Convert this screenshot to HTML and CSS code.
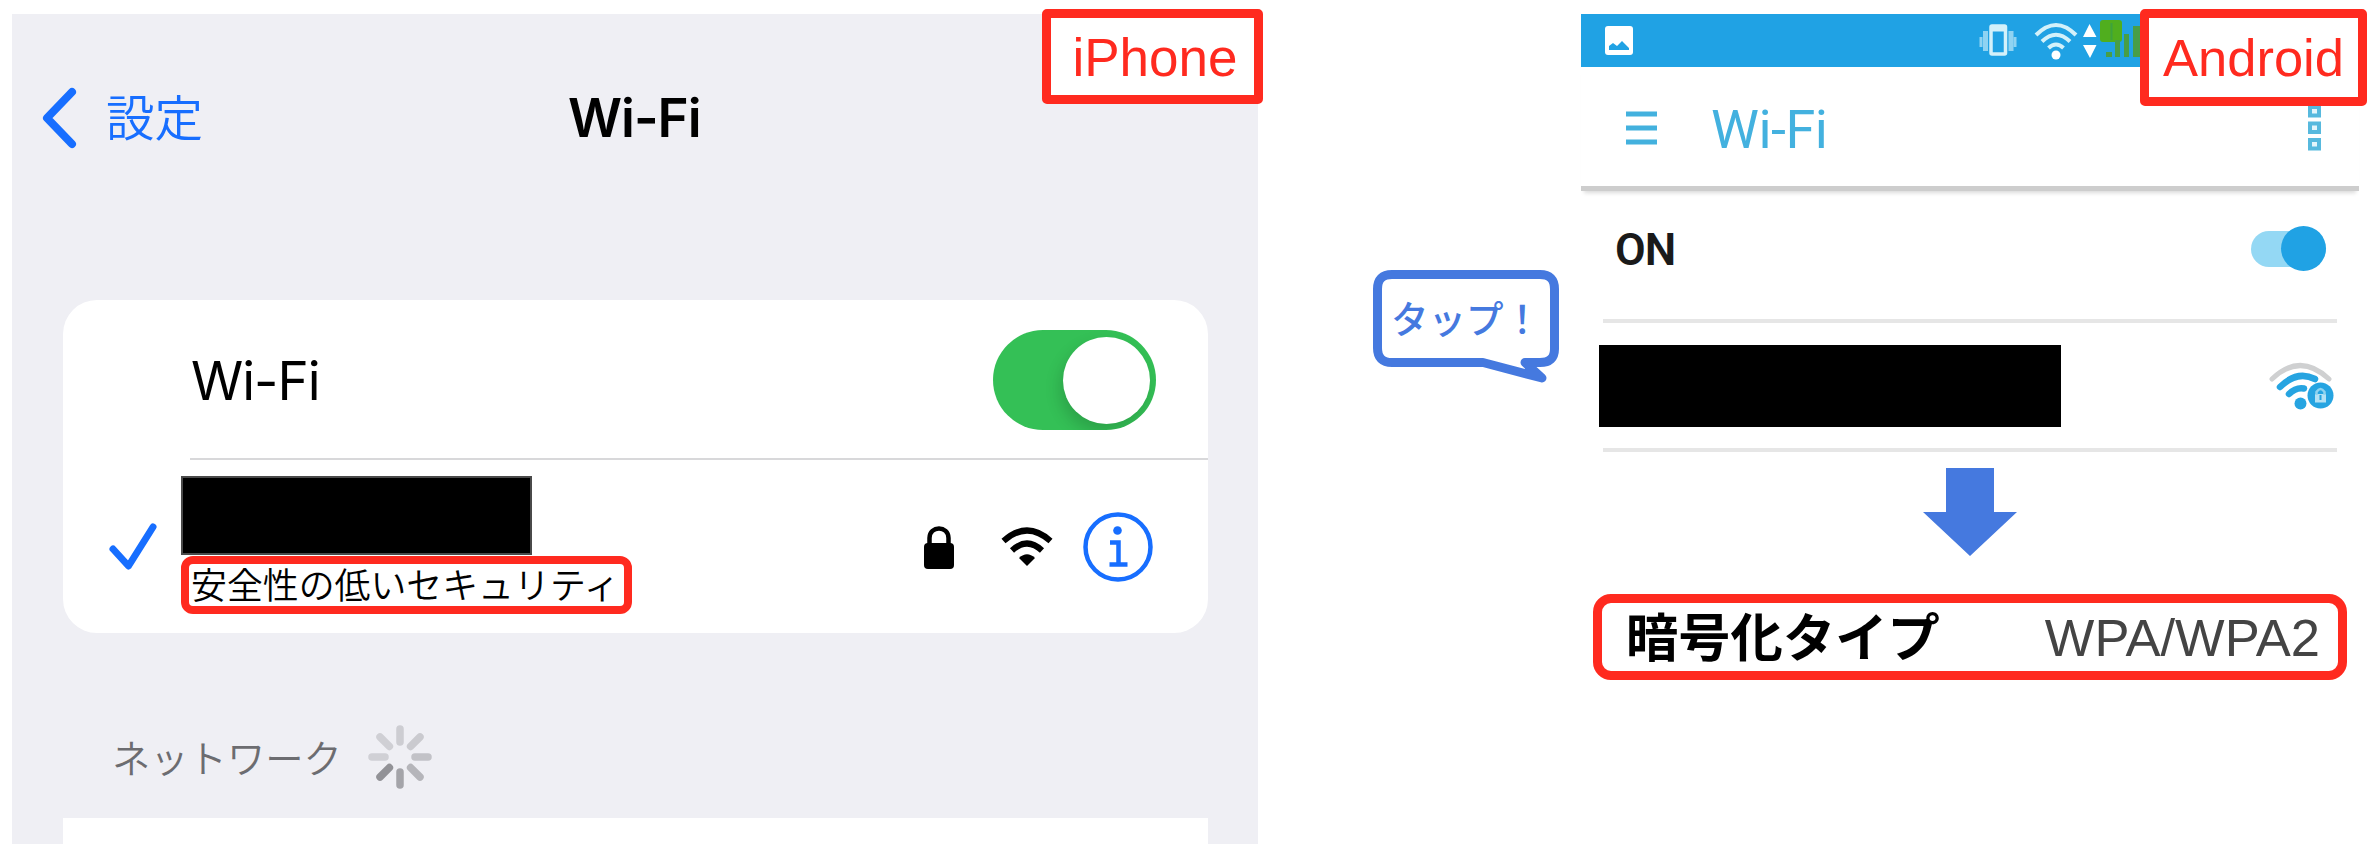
FILE: index.html
```html
<!DOCTYPE html>
<html lang="ja">
<head>
<meta charset="utf-8">
<title>Wi-Fi</title>
<link rel="stylesheet" href="styles.css">
</head>
<body>
<main class="page">
  <section class="iphone">
    <span class="badge badge-iphone">iPhone</span>
    <header class="ios-nav">
      <svg class="chevron" width="36" height="62" viewBox="0 0 36 62"><path d="M31 5 L6 31 L31 57" fill="none" stroke="#176eff" stroke-width="8" stroke-linecap="round" stroke-linejoin="round"/></svg>
      <span class="ios-back">設定</span>
      <h1 class="ios-title">Wi-Fi</h1>
    </header>
    <div class="ios-card">
      <div class="ios-row ios-row-toggle">
        <span class="ios-label">Wi-Fi</span>
        <span class="ios-switch"><span class="ios-knob"></span></span>
      </div>
      <div class="ios-row ios-row-network">
        <svg class="check" width="52" height="52" viewBox="0 0 52 52"><path d="M5 28 L20.500 45 L45 6" fill="none" stroke="#176eff" stroke-width="7" stroke-linecap="round" stroke-linejoin="round"/></svg>
        <div class="network-main">
          <div class="redacted-ios"></div>
          <div class="warning">安全性の低いセキュリティ</div>
        </div>
        <svg class="lock" width="30" height="43" viewBox="0 0 30 43"><rect x="0" y="17" width="30" height="26" rx="4"/><path d="M5.500 19 V12 C5.500 -0.700 24.500 -0.700 24.500 12 V19" fill="none" stroke="#000" stroke-width="4.500"/></svg>
        <svg class="wifi" width="52" height="40" viewBox="0 0 52 40"><g fill="none" stroke="#000" stroke-width="6"><path d="M2.500 14 Q26 -7 49.500 14"/><path d="M11 23.500 Q26 9.500 41 23.500"/></g><path d="M18 31 Q26 23.500 34 31 L26 39 Z"/></svg>
        <svg class="info" width="70" height="70" viewBox="0 0 70 70"><circle cx="35" cy="35" r="32.500" fill="none" stroke="#176eff" stroke-width="4.500"/><circle cx="34.500" cy="18.500" r="4.300" fill="#176eff"/><path d="M27 30.500 H35.500 V53 M26.500 52.500 H44.500" fill="none" stroke="#176eff" stroke-width="4.500"/></svg>
      </div>
    </div>
    <div class="ios-section">
      <span>ネットワーク</span>
      <svg width="66" height="66" viewBox="-33 -33 66 66"><g stroke-width="7.500" stroke-linecap="round"><path d="M0 -15 V-28" stroke="#cdcdd2"/><path d="M10.600 -10.600 L20 -20" stroke="#cacacf"/><path d="M15 0 H28" stroke="#c2c2c7"/><path d="M10.600 10.600 L20 20" stroke="#b5b5ba"/><path d="M0 15 V28" stroke="#a4a4a9"/><path d="M-10.600 10.600 L-20 20" stroke="#929297"/><path d="M-15 0 H-28" stroke="#d0d0d5"/><path d="M-10.600 -10.600 L-20 -20" stroke="#cfcfd4"/></g></svg>
    </div>
    <div class="ios-next"></div>
  </section>

  <div class="callout">
    <svg class="callout-shape" width="190" height="102" viewBox="0 0 190 102"><path d="M21 6.500 H169 Q183.500 6.500 183.500 21 V81 Q183.500 94.500 169 94.500 H154 L171 110 L112 94.500 H21 Q6.500 94.500 6.500 80 V21 Q6.500 6.500 21 6.500 Z" fill="#fff" stroke="#4579df" stroke-width="9" stroke-linejoin="round"/></svg>
    <span class="callout-text">タップ！</span>
  </div>

  <section class="android">
    <span class="badge badge-android">Android</span>
    <div class="status">
      <svg class="picture" width="28" height="29" viewBox="0 0 28 29"><rect width="28" height="29" rx="3" fill="#fff"/><path d="M4 24 V20 L8 17 L12 20 L17 15 L24 22 V24 Z" fill="#20a2e4"/></svg>
      <svg class="status-icons" width="182" height="44" viewBox="0 0 182 44"><g fill="none" stroke="#d3f1fa"><rect x="12" y="7" width="14.500" height="28" rx="1" stroke-width="3.500"/><path d="M12 10 H26" stroke-width="5"/><path d="M6.500 12 V32 M32 12 V32" stroke-width="5" stroke="#8fd3f2"/><path d="M2 18 V28 M36 18 V28" stroke-width="3" stroke="#8fd3f2"/><path d="M57 16 Q77 -4 97 16 M63 22.500 Q77 9 91 22.500 M69.500 29 Q77 22 84.500 29" stroke-width="4"/></g><circle cx="77" cy="36" r="4.500" fill="#fff"/><path d="M104 18 L110.500 5 L117.500 18 Z M104 26 H117.500 L111 39 Z" fill="#fff"/><rect x="121" y="1" width="22" height="22" rx="3" fill="#50ae1e"/><path d="M132.500 4 V21" stroke="#3da33c" stroke-width="2"/><path d="M127 33 H133 V38 H127 Z M136 21 H141 V38 H136 Z M145 15 H150 V38 H145 Z M154 7 H161 V38 H154 Z" fill="#489e46"/></svg>
    </div>
    <header class="android-bar">
      <svg width="31" height="34" viewBox="0 0 31 34"><path d="M0 3 H31 M0 17 H31 M0 31 H31" stroke="#43b1de" stroke-width="5"/></svg>
      <h2 class="android-title">Wi-Fi</h2>
      <svg class="more" width="13" height="46" viewBox="0 0 13 46"><g fill="#e4f5fb" stroke="#57b9de" stroke-width="4"><rect x="2" y="2" width="9" height="8.500"/><rect x="2" y="18.500" width="9" height="8.500"/><rect x="2" y="35" width="9" height="8.500"/></g></svg>
    </header>
    <div class="android-row row-on">
      <span class="on">ON</span>
      <span class="android-switch"><span class="android-knob"></span></span>
    </div>
    <div class="android-row row-network">
      <div class="redacted-android"></div>
      <svg class="wifi-lock" width="66" height="50" viewBox="0 0 66 50"><g fill="none" stroke-width="5" stroke-linecap="round"><path d="M4 18 Q32 -9 61 18" stroke="#cfd0d1"/><path d="M12 26 Q29 9 47 18" stroke="#26a4e1" stroke-width="6.500"/><path d="M21 33 Q28 26 36 27.500" stroke="#26a4e1" stroke-width="6.500"/></g><circle cx="32.500" cy="42.500" r="6" fill="#26a4e1"/><circle cx="52.500" cy="34.500" r="13" fill="#26a4e1"/><rect x="47" y="33" width="11" height="8.500" fill="#b4e1f4"/><path d="M48.500 34 V31 Q52.500 25 56.500 31 V34" fill="none" stroke="#8fd3f0" stroke-width="2.500"/><path d="M52.500 34 V39" stroke="#26a4e1" stroke-width="2"/></svg>
    </div>
    <svg class="arrow" width="96" height="89" viewBox="0 0 96 89"><path d="M24 0 H72 V44 H95 L48 88 L1 44 H24 Z" fill="#4579df"/></svg>
    <div class="encryption"><strong>暗号化タイプ</strong><span>WPA/WPA2</span></div>
  </section>
</main>
</body>
</html>
```
FILE: styles.css
```css
* { box-sizing: border-box; }
body { margin: 0; background: #fff; font-family: "Liberation Sans", "Noto Sans CJK JP", sans-serif; }
svg { display: block; flex: none; }
h1, h2 { margin: 0; }
.page { display: flex; align-items: flex-start; width: 2376px; height: 856px; padding-top: 14px; padding-left: 12px; overflow: hidden; }

.badge { position: absolute; z-index: 2; display: flex; align-items: center; justify-content: center; background: #fff; border: 9px solid #ff2a1f; border-radius: 5px; color: #ff2a1f; font-size: 53px; line-height: 1; white-space: nowrap; }
.badge-iphone { left: 1030px; top: -5px; width: 221px; height: 95px; padding: 2px 0 0 5px; }
.badge-android { left: 559px; top: -5px; width: 227px; height: 97px; padding-top: 1px; font-size: 52.500px; }

.iphone { position: relative; flex: none; display: flex; flex-direction: column; width: 1246px; height: 830px; padding: 0 50px 0 51px; background: #efeff4; }
.ios-nav { display: grid; grid-template-columns: 65px 462px auto; align-items: center; height: 207px; margin: 0 0 79px -22px; }
.ios-back { padding-bottom: 5px; color: #176eff; font: 350 48.500px/60px "Noto Sans CJK JP", sans-serif; }
.ios-title { font: 600 53px/60px Inter, sans-serif; letter-spacing: -1px; white-space: nowrap; padding-top: 1px; }
.ios-card { flex: none; height: 333px; background: #fff; border-radius: 34px; }
.ios-row { display: flex; }
.ios-row-toggle { align-items: center; justify-content: space-between; height: 160px; margin-left: 127px; padding: 2px 52px 0 1px; border-bottom: 2px solid #d8d8da; }
.ios-label { font: 400 53px/60px Inter, sans-serif; letter-spacing: -1px; padding-top: 1px; }
.ios-switch { display: flex; align-items: center; justify-content: flex-end; width: 163px; height: 100px; padding-right: 6px; border-radius: 50px; background: #34c056; overflow: hidden; }
.ios-knob { width: 87px; height: 87px; border-radius: 50%; background: #fff; box-shadow: -3px 8px 16px rgba(0,0,0,.16); }
.ios-row-network { align-items: center; height: 173px; padding: 1px 56px 0 45px; }
.network-main { width: 452px; margin-left: 21px; align-self: flex-start; padding-top: 15px; }
.redacted-ios { width: 351px; height: 79px; background: #000; border: 2px solid #4a4a4a; margin-bottom: 1px; }
.warning { width: 451px; height: 58px; border: 8.500px solid #ff2a1f; border-radius: 12px; padding-left: 2px; font: 350 35.900px/38px "Noto Sans CJK JP", sans-serif; white-space: nowrap; }
.lock { margin-left: 292px; }
.wifi { margin-left: 47px; }
.info { margin-left: 30px; }
.ios-section { display: flex; align-items: center; gap: 25px; height: 185px; padding: 63px 0 0 49px; color: #6c6c70; font: 350 38.300px/50px "Noto Sans CJK JP", sans-serif; }
.ios-next { flex: 1; background: #fff; }

.callout { position: relative; flex: none; width: 190px; height: 102px; margin: 254px 0 0 113px; display: flex; padding: 24px 0 0 20px; }
.callout-shape { position: absolute; left: 0; top: 0; overflow: visible; }
.callout-text { position: relative; color: #4579df; font: 500 37.500px/50px "Noto Sans CJK JP", sans-serif; white-space: nowrap; }

.android { position: relative; flex: none; width: 778px; margin-left: 20px; }
.status { display: flex; align-items: center; height: 53px; padding-left: 24px; background: #20a2e4; }
.status-icons { margin-left: 346px; }
.android-bar { display: flex; align-items: center; height: 124px; padding: 2px 0 0 45px; border-bottom: 5px solid #cdcdcd; box-shadow: 0 5px 4px -3px rgba(0,0,0,.15); }
.android-title { margin-left: 54px; padding-top: 5px; color: #43b1df; font: 400 54px/60px Roboto, sans-serif; letter-spacing: -.5px; }
.more { margin-left: auto; margin-right: 38px; }
.android-row { display: flex; align-items: center; justify-content: space-between; margin: 0 22px; border-bottom: 4px solid #e6e6e6; }
.row-on { height: 132px; padding: 0 11px 13px 12px; }
.on { color: #1a1a1a; font: 600 44.500px/50px Roboto, sans-serif; letter-spacing: -1px; padding-top: 2px; }
.android-switch { display: flex; align-items: center; justify-content: flex-end; width: 75px; height: 36px; border-radius: 18px; background: #94d8f4; }
.android-knob { flex: none; width: 45px; height: 45px; border-radius: 50%; background: #20a2e4; }
.row-network { height: 129px; }
.redacted-android { width: 462px; height: 82px; margin-left: -4px; background: #000; }
.wifi-lock { margin-right: 3px; }
.arrow { margin: 16px 0 0 341px; }
.encryption { display: flex; align-items: center; justify-content: space-between; width: 754px; height: 86px; margin: 37px 0 0 12px; padding: 0 18px 0 24px; border: 9px solid #ff2a1f; border-radius: 18px; background: #fff; }
.encryption strong { padding-bottom: 6px; font: 700 52.300px/60px "Noto Sans CJK JP", sans-serif; }
.encryption span { padding-top: 1px; color: #444; font-size: 52.500px; line-height: 60px; }
```
